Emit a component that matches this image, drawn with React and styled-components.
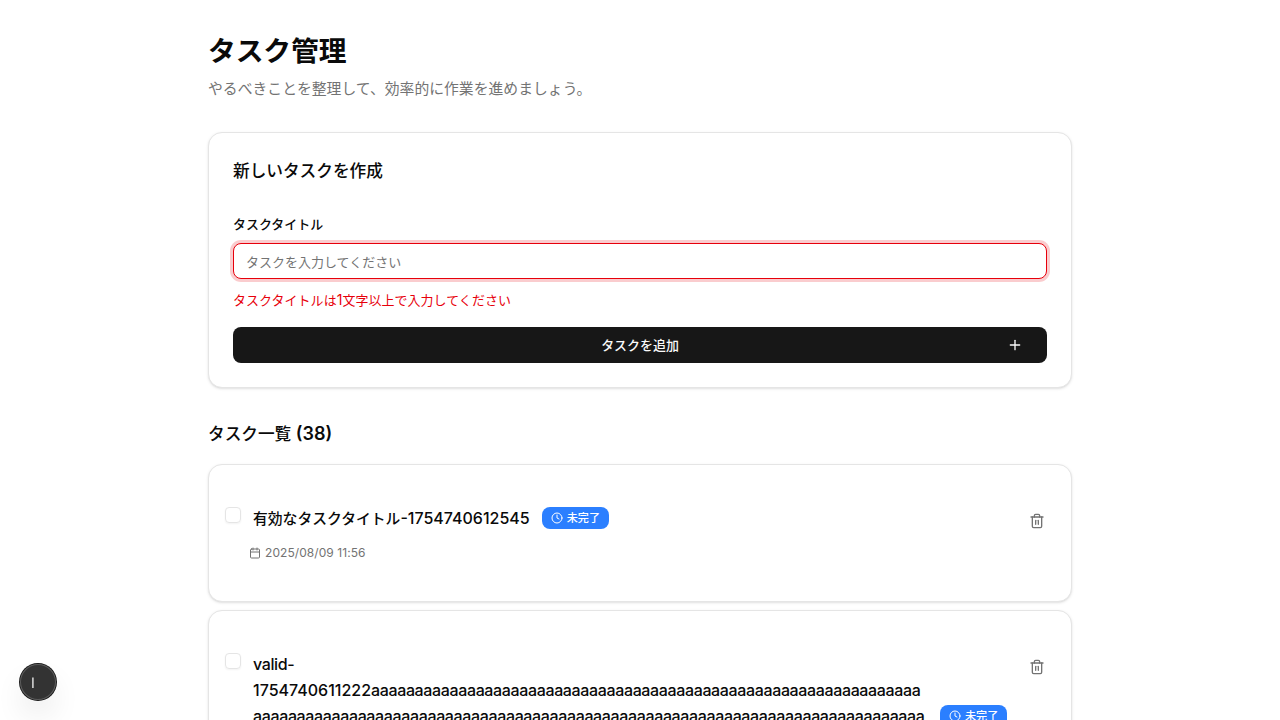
import React from "react";
import styled, { createGlobalStyle } from "styled-components";
import { Calendar, Clock, Plus, Trash2 } from "lucide-react";

const GlobalStyle = createGlobalStyle`
  *, *::before, *::after { box-sizing: border-box; }
  html, body { margin: 0; height: 100%; overflow: hidden; background: #fff; }
  body {
    color: #0a0a0a;
    font: 400 16px/24px Inter, "Noto Sans CJK JP", sans-serif;
    -webkit-font-smoothing: antialiased;
  }
  h1, h2, h3, p { margin: 0; }
  input, button { font-family: inherit; }
`;

const Page = styled.main`
  width: 896px;
  height: 720px;
  overflow: hidden;
  margin: 0 auto;
  padding: 32px 16px;
`;
/* Japanese glyphs are set slightly smaller than the Latin text beside them. */
const Ja = styled.span`
  font-size: 0.926em;
  line-height: 1;
  font-weight: ${(p) => p.$weight || "inherit"};
`;
/* Runs of letters are tracked in to keep the lines compact. */
const Run = styled.span`
  letter-spacing: -0.365px;
`;
const Header = styled.header`
  display: flex;
  flex-direction: column;
  gap: 8px;
  margin-bottom: 32px;
`;
const PageTitle = styled.h1`
  height: 36px;
  font-size: 30px;
  line-height: 36px;
  font-weight: 700;
  letter-spacing: -0.1px;
`;
const Lead = styled.p`
  height: 24px;
  line-height: 24px;
  letter-spacing: 0.03px;
  color: #737373;
`;
const Card = styled.section`
  border: 1px solid #e5e5e5;
  border-radius: 14px;
  background: #fff;
  box-shadow: 0 1px 3px rgba(0, 0, 0, 0.1), 0 1px 2px -1px rgba(0, 0, 0, 0.1);
`;
const FormCard = styled(Card)`
  height: 256px;
  padding: 24px;
`;
const SectionTitle = styled.h2`
  height: 28px;
  font-size: 18px;
  line-height: 28px;
  font-weight: 600;
`;
const Form = styled.form`
  display: flex;
  flex-direction: column;
  margin-top: 32px;
`;
const Label = styled.label`
  height: 14px;
  font-size: 14px;
  line-height: 14px;
  font-weight: 500;
  margin-bottom: 12px;
`;
const Input = styled.input`
  height: 36px;
  padding: 6px 12px 4px;
  border: 1px solid #e7000b;
  border-radius: 8px;
  outline: none;
  font-size: 13px;
  box-shadow: 0 0 0 3px rgba(231, 0, 11, 0.2);
  &::placeholder { color: #737373; opacity: 1; }
`;
const ErrorText = styled.p`
  height: 20px;
  margin: 11px 0 17px;
  color: #e7000b;
  font-size: 14px;
  line-height: 20px;
  letter-spacing: 0.07px;
`;
const Submit = styled.button`
  display: grid;
  grid-template-columns: 16px 1fr 16px;
  align-items: center;
  height: 36px;
  padding: 0 24px;
  border: 0;
  border-radius: 8px;
  background: #171717;
  color: #fafafa;
  font-size: 14px;
  line-height: 20px;
  font-weight: 500;
  & > span { grid-column: 2; }
`;
const ListTitle = styled(SectionTitle)`
  margin: 32px 0 16px;
`;
const List = styled.div`
  display: flex;
  flex-direction: column;
  gap: 8px;
`;
const TaskCard = styled(Card)`
  display: flex;
  align-items: flex-start;
  min-height: 138px;
  padding: 40px 16px;
`;
const Checkbox = styled.span`
  flex: none;
  width: 16px;
  height: 16px;
  margin: 2px 12px 0 0;
  border: 1px solid #e5e5e5;
  border-radius: 4px;
  box-shadow: 0 1px 2px rgba(0, 0, 0, 0.05);
`;
const TaskBody = styled.div`
  flex: 1;
  min-width: 0;
`;
const TitleRow = styled.div`
  display: flex;
  align-items: ${(p) => (p.$long ? "flex-end" : "center")};
  gap: 12px;
`;
const TaskTitle = styled.h3`
  flex: none;
  width: ${(p) => (p.$long ? "675px" : "auto")};
  font-size: 16px;
  line-height: 26px;
  font-weight: 500;
  white-space: pre-line;
`;
const Badge = styled.span`
  display: inline-flex;
  flex: none;
  align-items: center;
  gap: 4px;
  height: 22px;
  margin-bottom: ${(p) => (p.$raised ? "2px" : "0")};
  padding: 0 9px;
  border-radius: 8px;
  background: #2b7fff;
  color: #fff;
  font-size: 12px;
  line-height: 16px;
  font-weight: 500;
  & > span { padding-top: 1px; }
`;
const DateRow = styled.div`
  display: flex;
  align-items: center;
  gap: 4px;
  margin: 14px 0 0 -4px;
  color: #737373;
  font-size: 12px;
  line-height: 16px;
  letter-spacing: 0.07px;
`;
const DeleteButton = styled.button`
  display: grid;
  place-items: center;
  width: 36px;
  height: 32px;
  border: 0;
  padding: 0;
  background: none;
  color: #737373;
`;
const DevBadge = styled.div`
  position: fixed;
  left: 20px;
  bottom: 20px;
  width: 36px;
  height: 36px;
  border-radius: 50%;
  background: #333;
  box-shadow: 0 0 0 1px #171717, inset 0 0 0 1px #5c5c5c, 0 16px 32px -8px rgba(0, 0, 0, 0.24);
  svg { display: block; }
`;

const tasks = [
  { id: 1, ja: "有効なタスクタイトル", title: "-1754740612545", date: "2025/08/09 11:56" },
  { id: 2, lead: "valid-", title: "\n1754740611222", runs: [63, 77], date: "2025/08/09 11:56", long: true },
];

function Task({ task }) {
  return (
    <TaskCard>
      <Checkbox />
      <TaskBody>
        <TitleRow $long={task.long}>
          <TaskTitle $long={task.long}>
            {task.ja && <Ja>{task.ja}</Ja>}
            {task.lead && <Run>{task.lead}</Run>}
            {task.title}
            {task.runs && <Run>{task.runs.map((n) => "a".repeat(n)).join("\n")}</Run>}
          </TaskTitle>
          <Badge $raised={task.long}><Clock size={12} /><Ja>未完了</Ja></Badge>
        </TitleRow>
        <DateRow><Calendar size={12} />{task.date}</DateRow>
      </TaskBody>
      <DeleteButton aria-label="delete"><Trash2 size={16} /></DeleteButton>
    </TaskCard>
  );
}

export default function App() {
  return (
    <>
      <GlobalStyle />
      <Page>
        <Header>
          <PageTitle><Ja>タスク管理</Ja></PageTitle>
          <Lead><Ja>やるべきことを整理して、効率的に作業を進めましょう。</Ja></Lead>
        </Header>
        <FormCard>
          <SectionTitle><Ja $weight={500}>新しいタスクを作成</Ja></SectionTitle>
          <Form>
            <Label><Ja>タスクタイトル</Ja></Label>
            <Input placeholder="タスクを入力してください" />
            <ErrorText><Ja>タスクタイトルは</Ja>1<Ja>文字以上で入力してください</Ja></ErrorText>
            <Submit type="button"><span><Ja>タスクを追加</Ja></span><Plus size={16} /></Submit>
          </Form>
        </FormCard>
        <ListTitle><Ja $weight={500}>タスク一覧</Ja> (38)</ListTitle>
        <List>{tasks.map((t) => <Task key={t.id} task={t} />)}</List>
      </Page>
      <DevBadge>
        <svg width="36" height="36" viewBox="0 0 36 36">
          <path d="M12.9 13.6v10.4" stroke="#dcdcdc" strokeWidth="1.5" />
        </svg>
      </DevBadge>
    </>
  );
}
